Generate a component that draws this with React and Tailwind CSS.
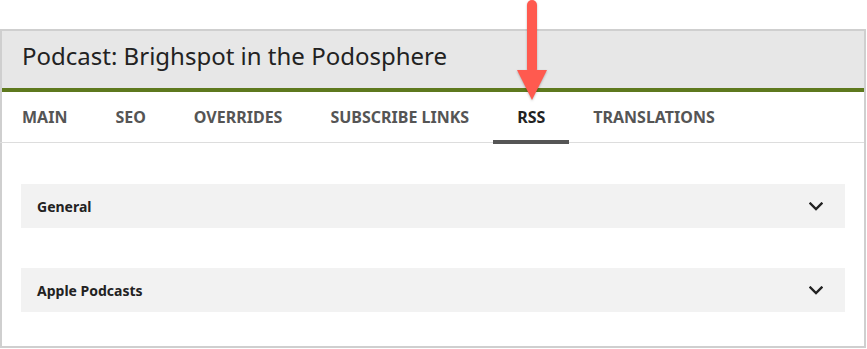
import React from "react";

const tabs = ["MAIN", "SEO", "OVERRIDES", "SUBSCRIBE LINKS", "RSS", "TRANSLATIONS"];

function Chevron() {
  return (
    <svg width="14" height="9" viewBox="0 0 14 9" fill="none">
      <polyline points="1.5,1.5 7,7 12.5,1.5" stroke="#222" strokeWidth="2.3" strokeLinecap="square" />
    </svg>
  );
}

function Accordion({ title }) {
  return (
    <div className="h-[44px] bg-[#f2f2f2] flex items-center justify-between pl-[16px] pr-[22px]">
      <span className="text-[14px] font-bold text-[#222]">{title}</span>
      <Chevron />
    </div>
  );
}

export default function App() {
  return (
    <div
      className="relative w-[867px] h-[349px] bg-white overflow-hidden"
      style={{ fontFamily: '"Noto Sans", "Open Sans", sans-serif' }}
    >
      <div className="mt-[29px] w-[866px] h-[319px] border-2 border-[#cfcfcf] flex flex-col">
        <div className="h-[61px] bg-[#e7e7e7] border-b-4 border-[#5e791e] pl-[20px] pt-[8px]">
          <h1 className="text-[24px] leading-[33px] text-[#222]">Podcast: Brighspot in the Podosphere</h1>
        </div>
        <div className="h-[51px] border-b border-[#dddddd] flex -ml-[4px]">
          {tabs.map((t) => (
            <div
              key={t}
              className={
                t === "RSS"
                  ? "h-[52px] px-6 pt-[15px] border-b-4 border-[#555555] text-[16px] leading-[20px] font-bold text-[#222]"
                  : "h-[52px] px-6 pt-[15px] border-b-4 border-transparent text-[16px] leading-[20px] font-bold text-[#555555]"
              }
            >
              {t}
            </div>
          ))}
        </div>
        <div className="flex flex-col gap-[40px] px-[19px] pt-[41px]">
          <Accordion title="General" />
          <Accordion title="Apple Podcasts" />
        </div>
      </div>
      <svg
        className="absolute left-[512px] top-0"
        width="40"
        height="104"
        viewBox="0 0 40 104"
        style={{ filter: "drop-shadow(0 1px 1px rgba(0,0,0,0.25))" }}
      >
        <rect x="15" y="0" width="10" height="74" rx="5" fill="#ff5a4f" />
        <polygon points="5,70 35,70 20,100" fill="#ff5a4f" />
      </svg>
    </div>
  );
}
